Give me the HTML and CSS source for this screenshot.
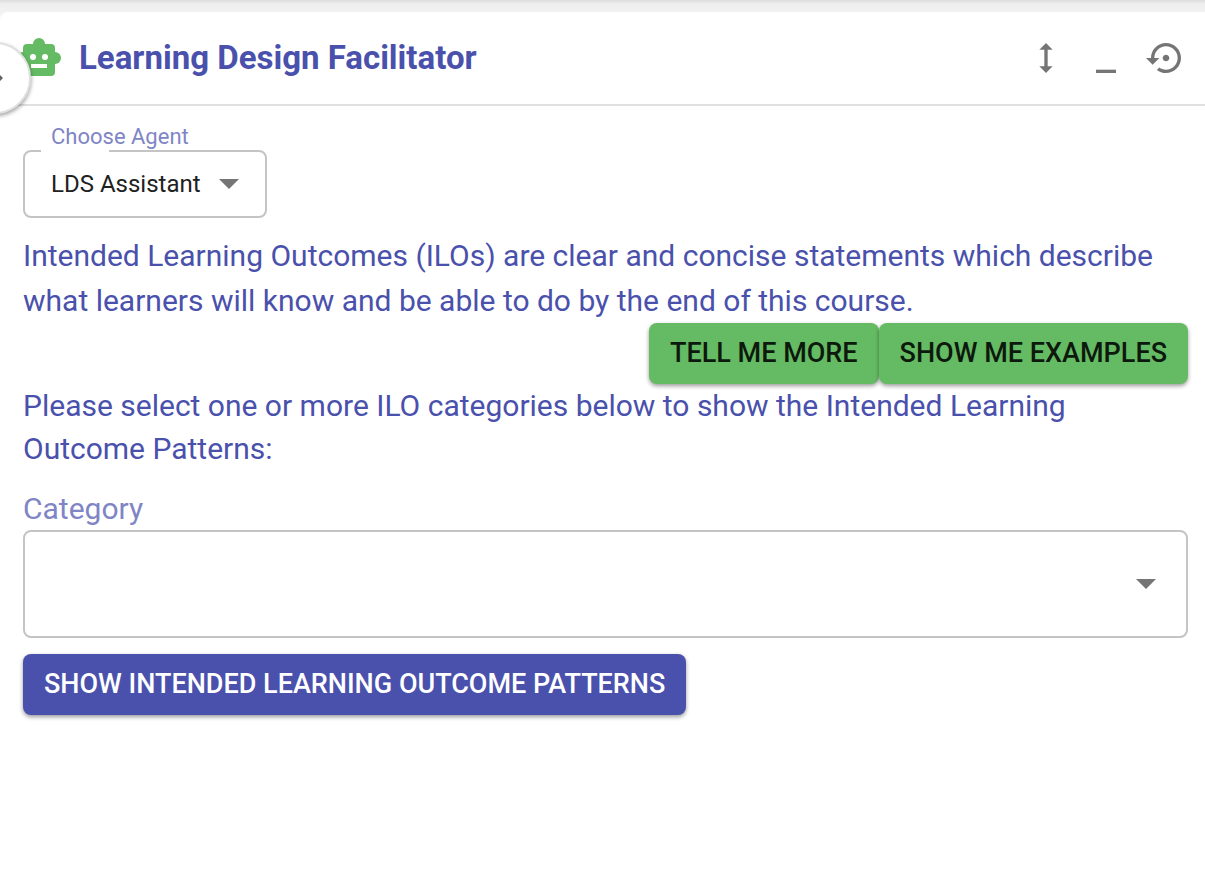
FILE: index.html
```html
<!DOCTYPE html>
<html lang="en">

<head>
    <meta charset="UTF-8">
    <meta name="viewport" content="width=device-width, initial-scale=1.0">
    <title>Learning Design Facilitator</title>
    <link rel="stylesheet" href="styles.css">
</head>

<body>
    <div class="top-strip"></div>

    <main class="panel">
        <header class="panel-header">
            <svg class="robot" viewBox="0 0 48 48" aria-hidden="true">
                <g fill="#64bb63">
                    <rect x="8" y="10" width="32" height="32" rx="4" />
                    <circle cx="24" cy="10" r="6" />
                    <circle cx="40" cy="24" r="6" />
                    <circle cx="8" cy="24" r="6" />
                </g>
                <g fill="#fff">
                    <circle cx="18" cy="23" r="3" />
                    <circle cx="30" cy="23" r="3" />
                    <rect x="16" y="30" width="16" height="4" />
                </g>
            </svg>
            <h1>Learning Design Facilitator</h1>
            <div class="tools">
                <button class="icon-btn" aria-label="Resize height">
                    <svg viewBox="0 0 24 24"><path d="M13 6.99h3L12 3 8 6.99h3v10.02H8L12 21l4-3.99h-3z" /></svg>
                </button>
                <button class="icon-btn" aria-label="Minimize">
                    <svg viewBox="0 0 24 24"><path d="M6 19h12v2H6z" /></svg>
                </button>
                <button class="icon-btn" aria-label="Restart">
                    <svg viewBox="0 0 24 24"><path d="M14 12c0-1.100-.9-2-2-2s-2 .9-2 2 .9 2 2 2 2-.9 2-2zm-2-9c-4.970 0-9 4.030-9 9H0l4 4 4-4H5c0-3.870 3.130-7 7-7s7 3.130 7 7-3.130 7-7 7c-1.510 0-2.910-.49-4.060-1.300l-1.420 1.440C8.040 20.300 9.940 21 12 21c4.970 0 9-4.030 9-9s-4.030-9-9-9z" /></svg>
                </button>
            </div>
            <button class="drawer-btn" aria-label="Open drawer">
                <svg viewBox="0 0 24 24"><path d="M10 6L8.590 7.410 13.170 12l-4.580 4.590L10 18l6-6z" /></svg>
            </button>
        </header>

        <div class="content">
            <label class="agent-label" for="agent">Choose Agent</label>
            <div class="select-wrap agent-wrap">
                <select class="agent" id="agent">
                    <option>LDS Assistant</option>
                </select>
                <svg class="caret" viewBox="0 0 20 10" aria-hidden="true"><path d="M0 0h20L10 10z" /></svg>
            </div>

            <p class="intro">Intended Learning Outcomes (ILOs) are clear and concise statements which describe what learners will know and be able to do by the end of this course.</p>
            <div class="actions">
                <button class="btn green">TELL ME MORE</button>
                <button class="btn green">SHOW ME EXAMPLES</button>
            </div>
            <p class="prompt">Please select one or more ILO categories below to show the Intended Learning Outcome Patterns:</p>

            <label class="category-label" for="category">Category</label>
            <div class="select-wrap category-wrap">
                <select class="category" id="category">
                    <option></option>
                </select>
                <svg class="caret" viewBox="0 0 20 10" aria-hidden="true"><path d="M0 0h20L10 10z" /></svg>
            </div>
            <button class="btn blue">SHOW INTENDED LEARNING OUTCOME PATTERNS</button>
        </div>
    </main>
</body>

</html>
```
FILE: styles.css
```css
* {
    box-sizing: border-box;
}

body {
    margin: 0;
    min-height: 100vh;
    display: flex;
    flex-direction: column;
    overflow-x: hidden;
    background-color: #f2f2f2;
    font-family: Roboto, sans-serif;
    font-size: 30px;
    color: #4a51ac;
}

button,
select {
    font-family: inherit;
    cursor: pointer;
}

.top-strip {
    height: 12px;
    background: linear-gradient(#dcdcdc, #eeeeee 4px, #f2f2f2);
}

.panel {
    flex: 1;
    background-color: white;
    border-top-left-radius: 8px;
}

.panel-header {
    position: relative;
    display: flex;
    align-items: center;
    height: 94px;
    padding: 0 19px 0 15px;
    border-bottom: 2px solid #e0e0e0;
}

.robot {
    width: 48px;
    height: 48px;
}

h1 {
    margin: 0 0 2px 16px;
    font-size: 33px;
    font-weight: bold;
}

.tools {
    display: flex;
    gap: 20px;
    margin-left: auto;
}

.icon-btn {
    display: flex;
    padding: 0;
    border: none;
    background: none;
}

.icon-btn svg {
    width: 40px;
    height: 40px;
    fill: #757575;
}

/* half hidden at the window edge */
.drawer-btn {
    position: absolute;
    left: -41px;
    top: 30px;
    width: 72px;
    height: 72px;
    padding: 0;
    display: flex;
    align-items: center;
    justify-content: center;
    border: 2px solid #e0e0e0;
    border-radius: 50%;
    background-color: white;
    box-shadow: 0 2px 4px rgba(0, 0, 0, 0.4);
}

.drawer-btn svg {
    width: 48px;
    height: 48px;
    fill: #616161;
}

.content {
    display: flex;
    flex-direction: column;
    align-items: flex-start;
    padding: 18px 17px 24px 23px;
}

.agent-label {
    margin-left: 28px;
    font-size: 22px;
    line-height: 26px;
    color: #8085c5;
}

.select-wrap {
    position: relative;
    display: flex;
    align-items: center;
}

.select-wrap select {
    appearance: none;
    width: 100%;
    border: 2px solid #c4c4c4;
    border-radius: 8px;
    background-color: white;
    color: #212121;
}

.agent {
    height: 68px;
    padding: 0 64px 0 26px;
    font-size: 24px;
}

/* notch in the outline under the label */
.agent-wrap::before {
    content: "";
    position: absolute;
    left: 18px;
    top: 0;
    width: 68px;
    height: 2px;
    background-color: white;
}

.caret {
    position: absolute;
    right: 28px;
    width: 20px;
    height: 10px;
    fill: #757575;
    pointer-events: none;
}

p {
    margin: 0;
}

.intro {
    margin-top: 15px;
    line-height: 45px;
}

.actions {
    display: flex;
    align-self: flex-end;
}

.btn {
    height: 61px;
    padding: 0 21px 2px;
    border: none;
    border-radius: 8px;
    font-size: 27px;
    font-weight: 500;
    box-shadow: 0 2px 4px rgba(0, 0, 0, 0.4);
}

.green {
    background-color: #64bb63;
    color: #0d190d;
}

.blue {
    margin-top: 16px;
    background-color: #4a51ac;
    color: white;
}

.prompt {
    line-height: 43px;
}

.category-label {
    margin-top: 19px;
    padding-bottom: 1px;
    line-height: 40px;
    color: #8085c5;
}

.category-wrap {
    align-self: stretch;
}

.category-wrap .caret {
    right: 32px;
}

.category {
    height: 108px;
    padding: 0 64px 0 28px;
    font-size: 30px;
}
```
